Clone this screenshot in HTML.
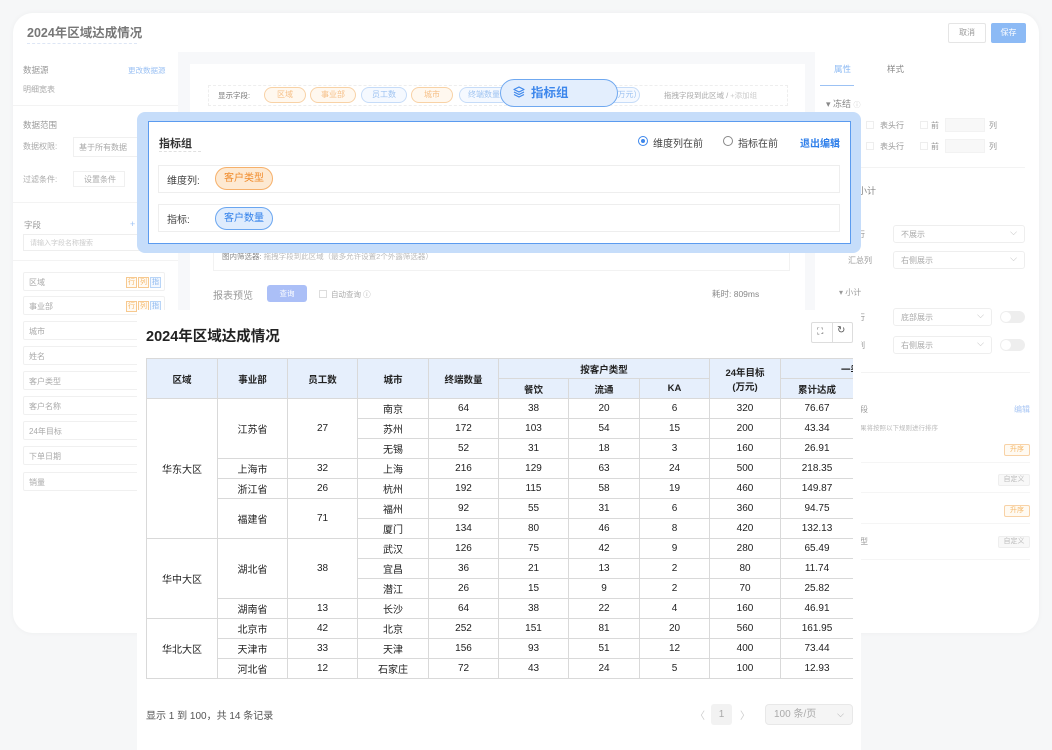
<!DOCTYPE html>
<html><head><meta charset="utf-8"><style>
*{box-sizing:border-box;margin:0;padding:0}
body{width:1052px;height:750px;overflow:hidden;background:#f6f7f8;font-family:"Liberation Sans","Noto Sans CJK SC",sans-serif;position:relative;color:#333}
.a{position:absolute;white-space:nowrap}
.g{color:#aaa;font-size:9px}
.tag{display:inline-block;border:1px solid #f7c98f;color:#f5b86a;font-size:7px;line-height:9px;padding:0 1px;margin-left:1px;background:#fffaf3;font-style:normal}
.tag.b{border-color:#b9d5f7;color:#8bb7ef;background:#f3f8ff}
.li{position:absolute;left:23px;width:142px;height:19px;border:1px solid #f0f0f0;border-radius:2px;font-size:8px;color:#aaa;padding:4px 5px}
.li span.t{position:absolute;right:3px;top:4px}
.pill{position:absolute;height:16px;border-radius:8px;font-size:8px;text-align:center;line-height:14px;white-space:nowrap;overflow:hidden}
.po{border:1px solid #f8d2a6;color:#f6c088;background:#fff8ef}
.pb{border:1px solid #c6dcf8;color:#9ec3f1;background:#f5f9ff}
.sel{position:absolute;height:18px;border:1px solid #eee;border-radius:3px;font-size:8px;color:#aaa;padding:3px 7px;background:#fff}
.sel:after{content:"⌵";position:absolute;right:7px;top:1px;color:#bbb;font-size:9px}
.tog{position:absolute;width:25px;height:12px;border-radius:6px;background:#eee}
.tog:after{content:"";position:absolute;left:1px;top:1px;width:10px;height:10px;border-radius:5px;background:#fff}
table{border-collapse:collapse;table-layout:fixed;font-size:10px;color:#222}
td,th{border:1px solid #d9d9d9;text-align:center;height:20px;padding:0}
th{background:#e6effc;font-weight:bold;font-size:9.5px}
</style></head><body>
<div class="a" style="left:13px;top:13px;width:1026px;height:620px;background:#f7f8fa;border-radius:20px;overflow:hidden;box-shadow:0 0 6px rgba(0,0,0,.04)">
 <div class="a" style="left:0;top:0;width:1026px;height:39px;background:#fff"></div>
 <div class="a" style="left:14px;top:9px;font-size:12.5px;color:#777;font-weight:bold">2024年区域达成情况</div>
 <div class="a" style="left:14px;top:30px;width:110px;border-top:1px dashed #dde6f5"></div>
 <div class="a" style="left:935px;top:10px;width:38px;height:20px;border:1px solid #e5e5e5;border-radius:2px;font-size:8px;color:#999;text-align:center;line-height:18px">取消</div>
 <div class="a" style="left:978px;top:10px;width:35px;height:20px;background:#8cbaf5;border-radius:2px;font-size:8px;color:#fff;text-align:center;line-height:20px">保存</div>
 <div class="a" style="left:0;top:39px;width:165px;height:581px;background:#fff"></div>
</div>
<div class="a" style="left:23px;top:64px;font-size:8.5px;color:#999">数据源</div>
<div class="a" style="left:128px;top:65px;font-size:7.5px;color:#9cc2f4">更改数据源</div>
<div class="a" style="left:23px;top:84px;font-size:8px;color:#aaa">明细宽表</div>
<div class="a" style="left:13px;top:105px;width:165px;border-top:1px solid #f3f3f3"></div>
<div class="a" style="left:23px;top:119px;font-size:8.5px;color:#999">数据范围</div>
<div class="a" style="left:23px;top:141px;font-size:8px;color:#aaa">数据权限:</div>
<div class="a" style="left:73px;top:137px;width:70px;height:20px;border:1px solid #f0f0f0;font-size:8px;color:#aaa;padding:4px 5px">基于所有数据</div>
<div class="a" style="left:23px;top:174px;font-size:8px;color:#aaa">过滤条件:</div>
<div class="a" style="left:73px;top:171px;width:52px;height:16px;border:1px solid #f0f0f0;font-size:8px;color:#aaa;padding:2px 10px">设置条件</div>
<div class="a" style="left:13px;top:202px;width:165px;border-top:1px solid #f3f3f3"></div>
<div class="a" style="left:24px;top:219px;font-size:8.5px;color:#999">字段</div>
<div class="a" style="left:130px;top:219px;font-size:9px;color:#9cc2f4">+</div>
<div class="a" style="left:23px;top:234px;width:120px;height:17px;border:1px solid #eee;font-size:7px;color:#ccc;padding:3px 6px">请输入字段名称搜索</div>
<div class="a" style="left:13px;top:260px;width:165px;border-top:1px solid #f3f3f3"></div>
<div class="li" style="top:272px">区域<span class="t"><i class="tag">行</i><i class="tag">列</i><i class="tag b">指</i></span></div>
<div class="li" style="top:296px">事业部<span class="t"><i class="tag">行</i><i class="tag">列</i><i class="tag b">指</i></span></div>
<div class="li" style="top:321px">城市<span class="t"><i class="tag">行</i></span></div>
<div class="li" style="top:346px">姓名<span class="t"><i class="tag">行</i></span></div>
<div class="li" style="top:371px">客户类型<span class="t"><i class="tag">行</i></span></div>
<div class="li" style="top:396px">客户名称<span class="t"><i class="tag">行</i></span></div>
<div class="li" style="top:421px">24年目标<span class="t"><i class="tag">行</i></span></div>
<div class="li" style="top:446px">下单日期<span class="t"><i class="tag">行</i></span></div>
<div class="li" style="top:472px">销量<span class="t"><i class="tag">行</i></span></div>

<div class="a" style="left:190px;top:64px;width:615px;height:246px;background:#fff"></div>
<div class="a" style="left:208px;top:85px;width:580px;height:21px;border:1px dashed #eee"></div>
<div class="a" style="left:218px;top:90px;font-size:7.5px;color:#777">显示字段:</div>
<div class="pill po" style="left:264px;top:87px;width:42px">区域</div>
<div class="pill po" style="left:310px;top:87px;width:46px">事业部</div>
<div class="pill pb" style="left:361px;top:87px;width:46px">员工数</div>
<div class="pill po" style="left:411px;top:87px;width:42px">城市</div>
<div class="pill pb" style="left:459px;top:87px;width:50px">终端数量</div>
<div class="pill pb" style="left:580px;top:87px;width:60px;text-align:right;padding-right:5px">4年目标（万元）</div>
<div class="a" style="left:664px;top:90px;font-size:7.5px;color:#aaa">拖拽字段到此区域 / <span style="color:#ccc">+添加组</span></div>
<div class="a" style="left:500px;top:79px;width:118px;height:28px;border:1px solid #6fa8f0;border-radius:14px;background:#e3eefd;color:#3d87ec;font-size:12.5px;font-weight:bold;line-height:26px;padding-left:12px"><svg width="12" height="12" viewBox="0 0 12 12" style="vertical-align:-1px;margin-right:6px"><path d="M6 1 L11 3.5 L6 6 L1 3.5Z M1 6 L6 8.5 L11 6 M1 8.5 L6 11 L11 8.5" fill="none" stroke="#3d87ec" stroke-width="1.2" stroke-linejoin="round"/></svg>指标组</div>
<div class="a" style="left:213px;top:245px;width:577px;height:26px;border:1px solid #f2f2f2"></div>
<div class="a" style="left:222px;top:251px;font-size:7.5px;color:#888">图内筛选器: <span style="color:#bbb">拖拽字段到此区域（最多允许设置2个外露筛选器）</span></div>
<div class="a" style="left:213px;top:287px;font-size:10px;color:#999">报表预览</div>
<div class="a" style="left:267px;top:285px;width:40px;height:17px;background:#abbff7;border-radius:3px;color:#fff;font-size:7.5px;text-align:center;line-height:17px">查询</div>
<div class="a" style="left:319px;top:290px;width:8px;height:8px;border:1px solid #ddd"></div>
<div class="a" style="left:331px;top:289px;font-size:7.5px;color:#aaa">自动查询 ⓘ</div>
<div class="a" style="left:712px;top:288px;font-size:8.5px;color:#888">耗时: 809ms</div>

<div class="a" style="left:815px;top:52px;width:224px;height:581px;background:#fff;border-bottom-right-radius:20px"></div>
<div class="a" style="left:834px;top:63px;font-size:8.5px;color:#8ab8f3">属性</div>
<div class="a" style="left:887px;top:63px;font-size:8.5px;color:#888">样式</div>
<div class="a" style="left:820px;top:85px;width:34px;border-top:1px solid #9cc2f4"></div>
<div class="a" style="left:826px;top:97px;font-size:9px;color:#888">▾ 冻结 <span style="font-size:7px;color:#ccc">ⓘ</span></div>
<div class="a" style="left:866px;top:121px;width:8px;height:8px;border:1px solid #eee"></div>
<div class="a" style="left:880px;top:120px;font-size:8px;color:#999">表头行</div>
<div class="a" style="left:920px;top:121px;width:8px;height:8px;border:1px solid #eee"></div>
<div class="a" style="left:931px;top:120px;font-size:8px;color:#999">前</div>
<div class="a" style="left:945px;top:118px;width:40px;height:14px;background:#f8f8f8;border:1px solid #f2f2f2"></div>
<div class="a" style="left:989px;top:120px;font-size:8px;color:#999">列</div>
<div class="a" style="left:866px;top:142px;width:8px;height:8px;border:1px solid #eee"></div>
<div class="a" style="left:880px;top:141px;font-size:8px;color:#999">表头行</div>
<div class="a" style="left:920px;top:142px;width:8px;height:8px;border:1px solid #eee"></div>
<div class="a" style="left:931px;top:141px;font-size:8px;color:#999">前</div>
<div class="a" style="left:945px;top:139px;width:40px;height:14px;background:#f8f8f8;border:1px solid #f2f2f2"></div>
<div class="a" style="left:989px;top:141px;font-size:8px;color:#999">列</div>
<div class="a" style="left:825px;top:167px;width:200px;border-top:1px solid #f3f3f3"></div>
<div class="a" style="left:858px;top:184px;font-size:9px;color:#888">小计</div>
<div class="a" style="left:857px;top:229px;font-size:8px;color:#999">行</div>
<div class="sel" style="left:893px;top:225px;width:132px">不展示</div>
<div class="a" style="left:848px;top:255px;font-size:8px;color:#999">汇总列</div>
<div class="sel" style="left:893px;top:251px;width:132px">右侧展示</div>
<div class="a" style="left:839px;top:287px;font-size:8px;color:#999">▾ 小计</div>
<div class="a" style="left:857px;top:312px;font-size:8px;color:#999">行</div>
<div class="sel" style="left:893px;top:308px;width:99px">底部展示</div>
<div class="tog" style="left:1000px;top:311px"></div>
<div class="a" style="left:857px;top:340px;font-size:8px;color:#999">列</div>
<div class="sel" style="left:893px;top:336px;width:99px">右侧展示</div>
<div class="tog" style="left:1000px;top:339px"></div>
<div class="a" style="left:860px;top:372px;width:170px;border-top:1px solid #f3f3f3"></div>
<div class="a" style="left:860px;top:404px;font-size:8px;color:#999">段</div>
<div class="a" style="left:1014px;top:404px;font-size:8px;color:#a8c6f4">编辑</div>
<div class="a" style="left:860px;top:422px;font-size:6.5px;color:#bbb">果将按照以下规则进行排序</div>
<div class="a" style="left:1004px;top:444px;width:26px;height:12px;border:1px solid #f8d2a6;border-radius:2px;font-size:7px;color:#f5b86a;text-align:center;line-height:10px;background:#fffaf2">升序</div>
<div class="a" style="left:860px;top:462px;width:170px;border-top:1px solid #f5f5f5"></div>
<div class="a" style="left:998px;top:474px;width:32px;height:12px;border:1px solid #eee;border-radius:2px;font-size:7px;color:#bbb;text-align:center;line-height:10px;background:#f8f8f8">自定义</div>
<div class="a" style="left:860px;top:492px;width:170px;border-top:1px solid #f5f5f5"></div>
<div class="a" style="left:1004px;top:505px;width:26px;height:12px;border:1px solid #f8d2a6;border-radius:2px;font-size:7px;color:#f5b86a;text-align:center;line-height:10px;background:#fffaf2">升序</div>
<div class="a" style="left:860px;top:523px;width:170px;border-top:1px solid #f5f5f5"></div>
<div class="a" style="left:860px;top:536px;font-size:8px;color:#999">型</div>
<div class="a" style="left:998px;top:536px;width:32px;height:12px;border:1px solid #eee;border-radius:2px;font-size:7px;color:#bbb;text-align:center;line-height:10px;background:#f8f8f8">自定义</div>
<div class="a" style="left:860px;top:559px;width:170px;border-top:1px solid #f5f5f5"></div>

<div class="a" style="left:137px;top:112px;width:724px;height:141px;background:#c6ddfa;border-radius:8px"></div>
<div class="a" style="left:148px;top:121px;width:703px;height:123px;background:#fff;border:1.5px solid #5b9bef"></div>
<div class="a" style="left:159px;top:135px;font-size:11px;font-weight:bold;color:#333">指标组</div>
<div class="a" style="left:159px;top:151px;width:42px;border-top:1px dashed #e0e0e0"></div>
<div class="a" style="left:638px;top:136px;width:10px;height:10px;border:1px solid #3d87ec;border-radius:50%"><div style="margin:2px;width:4px;height:4px;border-radius:2px;background:#3d87ec"></div></div>
<div class="a" style="left:653px;top:135px;font-size:10px;color:#444">维度列在前</div>
<div class="a" style="left:723px;top:136px;width:10px;height:10px;border:1px solid #888;border-radius:50%"></div>
<div class="a" style="left:738px;top:135px;font-size:10px;color:#444">指标在前</div>
<div class="a" style="left:800px;top:135px;font-size:10px;color:#2f7fea;font-weight:bold">退出编辑</div>
<div class="a" style="left:158px;top:165px;width:682px;height:28px;border:1px solid #eee"></div>
<div class="a" style="left:167px;top:172px;font-size:10px;color:#444">维度列:</div>
<div class="a" style="left:215px;top:167px;width:58px;height:23px;border:1px solid #f6b06a;border-radius:12px;background:#fde9d2;color:#f08a2a;font-size:10px;text-align:center;line-height:21px">客户类型</div>
<div class="a" style="left:158px;top:204px;width:682px;height:28px;border:1px solid #eee"></div>
<div class="a" style="left:167px;top:211px;font-size:10px;color:#444">指标:</div>
<div class="a" style="left:215px;top:207px;width:58px;height:23px;border:1px solid #6aa6f0;border-radius:12px;background:#dfecfd;color:#2f7fea;font-size:10px;text-align:center;line-height:21px">客户数量</div>

<div class="a" style="left:137px;top:310px;width:724px;height:440px;background:#fff"></div>
<div class="a" style="left:146px;top:325px;font-size:14.5px;font-weight:bold;color:#222">2024年区域达成情况</div>
<div class="a" style="left:811px;top:322px;width:42px;height:21px;border:1px solid #ddd;border-radius:2px;background:#fff"><div style="position:absolute;left:20px;top:0;height:19px;border-left:1px solid #ddd"></div><span style="position:absolute;left:5px;top:3px;font-size:9px;color:#555">⛶</span><span style="position:absolute;left:25px;top:2px;font-size:10px;color:#555">↻</span></div>
<div class="a" style="left:146px;top:358px;width:707px;height:326px;overflow:hidden">
<table style="width:780px">
<colgroup><col style="width:71px"><col style="width:70px"><col style="width:70px"><col style="width:71px"><col style="width:70px"><col style="width:70px"><col style="width:71px"><col style="width:70px"><col style="width:71px"><col style="width:73px"><col style="width:73px"></colgroup>
<tr><th rowspan="2">区域</th><th rowspan="2">事业部</th><th rowspan="2">员工数</th><th rowspan="2">城市</th><th rowspan="2">终端数量</th><th colspan="3">按客户类型</th><th rowspan="2">24年目标<br>(万元)</th><th colspan="2" style="text-align:left;padding-left:60px">一季度</th></tr>
<tr><th>餐饮</th><th>流通</th><th>KA</th><th>累计达成</th><th></th></tr>
<tr><td rowspan="7">华东大区</td><td rowspan="3">江苏省</td><td rowspan="3">27</td><td>南京</td><td>64</td><td>38</td><td>20</td><td>6</td><td>320</td><td>76.67</td><td></td></tr>
<tr><td>苏州</td><td>172</td><td>103</td><td>54</td><td>15</td><td>200</td><td>43.34</td><td></td></tr>
<tr><td>无锡</td><td>52</td><td>31</td><td>18</td><td>3</td><td>160</td><td>26.91</td><td></td></tr>
<tr><td>上海市</td><td>32</td><td>上海</td><td>216</td><td>129</td><td>63</td><td>24</td><td>500</td><td>218.35</td><td></td></tr>
<tr><td>浙江省</td><td>26</td><td>杭州</td><td>192</td><td>115</td><td>58</td><td>19</td><td>460</td><td>149.87</td><td></td></tr>
<tr><td rowspan="2">福建省</td><td rowspan="2">71</td><td>福州</td><td>92</td><td>55</td><td>31</td><td>6</td><td>360</td><td>94.75</td><td></td></tr>
<tr><td>厦门</td><td>134</td><td>80</td><td>46</td><td>8</td><td>420</td><td>132.13</td><td></td></tr>
<tr><td rowspan="4">华中大区</td><td rowspan="3">湖北省</td><td rowspan="3">38</td><td>武汉</td><td>126</td><td>75</td><td>42</td><td>9</td><td>280</td><td>65.49</td><td></td></tr>
<tr><td>宜昌</td><td>36</td><td>21</td><td>13</td><td>2</td><td>80</td><td>11.74</td><td></td></tr>
<tr><td>潜江</td><td>26</td><td>15</td><td>9</td><td>2</td><td>70</td><td>25.82</td><td></td></tr>
<tr><td>湖南省</td><td>13</td><td>长沙</td><td>64</td><td>38</td><td>22</td><td>4</td><td>160</td><td>46.91</td><td></td></tr>
<tr><td rowspan="3">华北大区</td><td>北京市</td><td>42</td><td>北京</td><td>252</td><td>151</td><td>81</td><td>20</td><td>560</td><td>161.95</td><td></td></tr>
<tr><td>天津市</td><td>33</td><td>天津</td><td>156</td><td>93</td><td>51</td><td>12</td><td>400</td><td>73.44</td><td></td></tr>
<tr><td>河北省</td><td>12</td><td>石家庄</td><td>72</td><td>43</td><td>24</td><td>5</td><td>100</td><td>12.93</td><td></td></tr>
</table></div>
<div class="a" style="left:146px;top:707px;font-size:10px;color:#555">显示 1 到 100，共 14 条记录</div>
<div class="a" style="left:695px;top:707px;font-size:10px;color:#ccc">〈</div>
<div class="a" style="left:711px;top:704px;width:21px;height:21px;background:#f2f2f2;border-radius:3px;font-size:10px;color:#aaa;text-align:center;line-height:21px">1</div>
<div class="a" style="left:740px;top:707px;font-size:10px;color:#ccc">〉</div>
<div class="a" style="left:765px;top:704px;width:88px;height:21px;background:#f5f5f5;border:1px solid #e8e8e8;border-radius:4px;font-size:10px;color:#aaa;line-height:19px;padding-left:8px">100 条/页<span style="position:absolute;right:8px;font-size:9px">⌵</span></div>
</body></html>
